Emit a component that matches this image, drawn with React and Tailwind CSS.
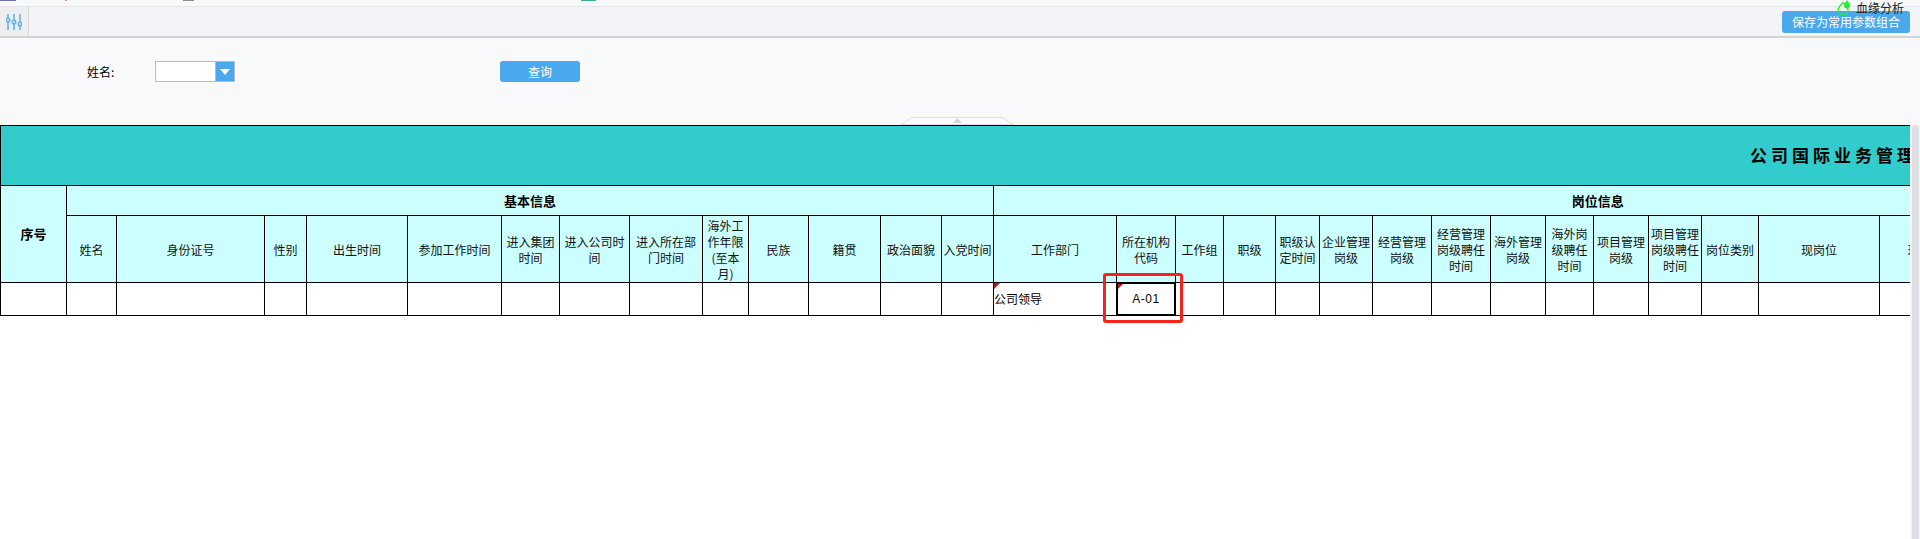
const cols = [66, 50, 148, 42, 101, 94, 58, 70, 73, 46, 60, 72, 61, 52, 123, 59, 48, 52, 44, 53, 59, 59, 55, 48, 55, 53, 57, 121, 140, 182];
const cjk = "font-['Noto_Sans_CJK_SC','Microsoft_YaHei',sans-serif]";
const subHeads = ["姓名","身份证号","性别","出生时间","参加工作时间","进入集团\n时间","进入公司时\n间","进入所在部\n门时间","海外工\n作年限\n(至本\n月)","民族","籍贯","政治面貌","入党时间","工作部门","所在机构\n代码","工作组","职级","职级认\n定时间","企业管理\n岗级","经营管理\n岗级","经营管理\n岗级聘任\n时间","海外管理\n岗级","海外岗\n级聘任\n时间","项目管理\n岗级","项目管理\n岗级聘任\n时间","岗位类别","现岗位","现岗位聘任时间",""];
const th = "border border-black bg-[#ccffff] p-0 pt-px text-center align-middle font-normal text-[12px] leading-4 whitespace-pre-line text-[#111]";
const thBold = "border border-black bg-[#ccffff] p-0 text-center align-middle text-[13px] font-bold leading-4 text-black";
const td = "border border-black bg-white p-0 text-[12px] leading-4 text-black h-[33px]";

function Sliders() {
  return (
    <svg width="16" height="16" viewBox="0 0 16 16" fill="none" stroke="#5ab0f0" strokeWidth="1.5">
      <path d="M2 0v4.200M2 7.800v8.200M8 0v6.200M8 9.800v6.200M14 0v8.200M14 11.800v4.200" />
      <circle cx="2" cy="6" r="1.800" />
      <circle cx="8" cy="8" r="1.800" />
      <circle cx="14" cy="10" r="1.800" />
    </svg>
  );
}

export default function App() {
  return (
    <div className={`flex h-[539px] w-[1920px] flex-col overflow-hidden bg-white ${cjk}`}>
      <div className="flex h-[7px] items-start border-b border-[#e4e6ec] bg-[#f8f9fb]">
        <div className="h-px w-4 bg-[#6f6fb0]" />
        <div className="ml-[49px] h-px w-0.5 bg-[#f5855c]" />
        <div className="ml-[116px] h-px w-[11px] bg-[#8a8a8a]" />
        <div className="ml-[387px] h-px w-[15px] bg-[#2fb295]" />
      </div>
      <div className="flex h-[31px] items-stretch border-b-2 border-[#d0d2d6] bg-[#f3f4f8]">
        <div className="flex w-[29px] items-center justify-center border-r border-[#d8d8d8] bg-[#eeeeee]">
          <Sliders />
        </div>
        <div className="flex flex-1 justify-end pr-2.5 pt-[4px]">
          <button className="relative h-[22px] w-[128px] rounded-[3px] bg-[#4aa9ec] text-center text-[12px] leading-[22px] text-white">
            保存为常用参数组合
            <span className="absolute bottom-[18px] right-[6px] flex items-center gap-1 whitespace-nowrap text-[12px] leading-[15px] text-[#222]">
              <svg width="15" height="15" viewBox="0 0 15 15" fill="none">
                <path d="M6 2.500C3.500 5.500 1 7.500 1 10a5 4.500 0 0 0 10 0C11 7.500 8.500 5.500 6 2.500Z" stroke="#22ee33" strokeWidth="1.300" />
                <path d="M10 0c-1.500 2.500-3 3.500-3 5.500a3 3 0 0 0 6 0C13 3.500 11.500 2.500 10 0Z" fill="#22ee33" />
              </svg>
              血缘分析
            </span>
          </button>
        </div>
      </div>
      <div className="relative flex h-[87px] items-start bg-[#f8f9fb] pt-[23px]">
        <span className="ml-[87px] w-[68px] text-[12px] leading-[21px] text-black">姓名:</span>
        <div className="flex h-[21px] w-20 border border-[#b8bac4] bg-white">
          <div className="flex-1" />
          <div className="flex w-[19px] items-center justify-center border-l border-[#b8bac4] bg-[#4aa9ec]">
            <div className="h-0 w-0 border-x-[5px] border-t-[6px] border-x-transparent border-t-white" />
          </div>
        </div>
        <button className="ml-[265px] h-[21px] w-20 rounded-[3px] bg-[#4aa9ec] text-[12px] leading-[21px] text-white">查询</button>
        <svg className="absolute bottom-0 left-[900px]" width="114" height="8" viewBox="0 0 114 8">
          <path d="M0 8 L12 0.500 H102 L114 8" fill="#fafbfc" stroke="#dedfe4" />
          <path d="M53 6 L57.500 1 L62 6 Z" fill="#d2d3d8" />
          <path d="M0 7.500 H114" stroke="#dedfe4" />
        </svg>
      </div>
      <div className="flex flex-1 overflow-hidden">
        <div className="relative min-w-0 flex-1 overflow-hidden">
          <table className="table-fixed border-collapse" style={{ width: cols.reduce((a, b) => a + b, 0) }}>
            <colgroup>
              {cols.map((w, i) => <col key={i} style={{ width: w }} />)}
            </colgroup>
            <tbody>
              <tr className="h-[60px]">
                <td colSpan={cols.length} className="border border-black bg-[#33cccc] p-0 pb-px pl-[1749px] text-left align-middle text-[17px] font-bold tracking-[4px] whitespace-nowrap text-black">
                  公司国际业务管理人员信息表
                </td>
              </tr>
              <tr className="h-[30px]">
                <th rowSpan={2} className={thBold}>序号</th>
                <th colSpan={13} className={thBold}>基本信息</th>
                <th colSpan={16} className={thBold}>岗位信息</th>
              </tr>
              <tr className="h-[67px]">
                {subHeads.map((t, i) => <th key={i} className={th}>{t}</th>)}
              </tr>
              <tr>
                {cols.map((_, i) => {
                  if (i === 14) return (
                    <td key={i} className={`${td} relative`}>
                      <span className="absolute left-0 top-0 h-0 w-0 border-r-[6px] border-t-[6px] border-r-transparent border-t-[#b01c1c]" />
                      公司领导
                    </td>
                  );
                  if (i === 15) return (
                    <td key={i} className={`${td} relative text-center font-['Liberation_Sans',sans-serif] tracking-[0.5px] text-[#333]`}>
                      <span className="absolute -inset-px border-2 border-black" />
                      <span className="absolute left-px top-px h-0 w-0 border-r-[5px] border-t-[5px] border-r-transparent border-t-[#b01c1c]" />
                      A-01
                      <span className="absolute -bottom-[8px] -left-[14px] -right-[8px] -top-[10px] z-10 rounded-[3px] border-[3px] border-[#f5231c]" />
                    </td>
                  );
                  return <td key={i} className={td} />;
                })}
              </tr>
            </tbody>
          </table>
        </div>
        <div className="w-2.5 bg-[#f5f6f8] pl-0.5">
          <div className="h-full w-[7px] rounded-t-md bg-[#dfe0e5]" />
        </div>
      </div>
    </div>
  );
}
